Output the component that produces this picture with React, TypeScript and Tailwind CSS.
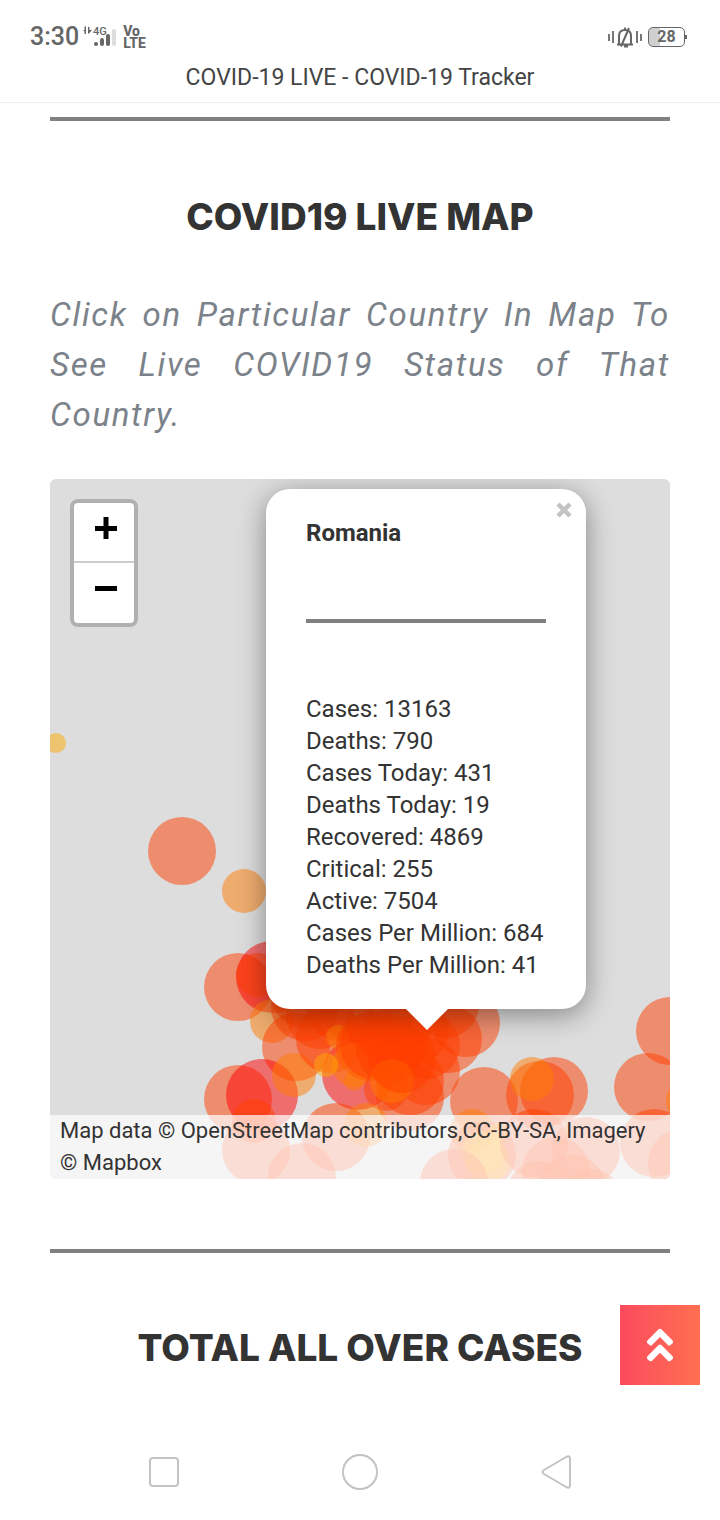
import { FaAngleDoubleUp } from "react-icons/fa";

type Kind = "high" | "severe" | "medium" | "low";
type Marker = [number, number, number, Kind];

const fills: Record<Kind, string> = {
  high: "#ff3d00",
  severe: "#ff0000",
  medium: "#ff7b00",
  low: "#ffaa00",
};

const markers: Marker[] = [
  [6, 264, 10, "low"],
  [132, 372, 34, "high"],
  [194, 412, 22, "medium"],
  [188, 508, 34, "high"],
  [222, 498, 36, "severe"],
  [208, 496, 22, "high"],
  [222, 542, 22, "medium"],
  [246, 568, 34, "high"],
  [188, 620, 34, "high"],
  [212, 616, 36, "severe"],
  [204, 642, 22, "high"],
  [244, 596, 22, "medium"],
  [308, 595, 36, "severe"],
  [304, 602, 10, "medium"],
  [255, 528, 34, "high"],
  [270, 536, 34, "high"],
  [280, 560, 34, "high"],
  [255, 515, 34, "high"],
  [290, 528, 34, "high"],
  [305, 530, 34, "high"],
  [288, 558, 12, "medium"],
  [320, 568, 34, "high"],
  [330, 545, 34, "high"],
  [304, 586, 22, "medium"],
  [324, 566, 34, "high"],
  [340, 570, 34, "high"],
  [345, 561, 34, "high"],
  [350, 541, 34, "high"],
  [365, 551, 34, "high"],
  [376, 566, 34, "high"],
  [376, 592, 34, "high"],
  [360, 602, 34, "high"],
  [360, 618, 34, "high"],
  [336, 610, 22, "high"],
  [342, 602, 22, "medium"],
  [352, 580, 34, "high"],
  [398, 560, 34, "high"],
  [416, 544, 34, "high"],
  [395, 525, 34, "high"],
  [276, 586, 12, "low"],
  [434, 622, 34, "high"],
  [490, 616, 34, "high"],
  [504, 612, 34, "high"],
  [482, 600, 22, "medium"],
  [620, 552, 34, "high"],
  [598, 608, 34, "high"],
  [638, 622, 22, "medium"],
  [604, 664, 34, "high"],
  [632, 684, 34, "high"],
  [206, 671, 34, "high"],
  [252, 698, 34, "high"],
  [286, 658, 34, "high"],
  [316, 646, 22, "medium"],
  [422, 652, 22, "medium"],
  [432, 676, 34, "high"],
  [434, 674, 22, "low"],
  [438, 682, 22, "low"],
  [448, 654, 10, "low"],
  [404, 704, 34, "high"],
  [484, 664, 34, "high"],
  [536, 672, 34, "high"],
  [506, 692, 34, "high"],
  [490, 716, 34, "high"],
  [522, 710, 34, "high"],
  [540, 724, 34, "high"],
];

const stats = [
  "Cases: 13163",
  "Deaths: 790",
  "Cases Today: 431",
  "Deaths Today: 19",
  "Recovered: 4869",
  "Critical: 255",
  "Active: 7504",
  "Cases Per Million: 684",
  "Deaths Per Million: 41",
];

function StatusBar() {
  return (
    <div className="flex h-[54px] items-center justify-between pt-5 pr-[33px] pl-[30px] text-[#666]">
      <div className="flex items-center">
        <span className="text-[25px] leading-8 font-medium">3:30</span>
        <svg className="ml-1" width="36" height="24" viewBox="0 0 36 24" fill="#666" role="img" aria-label="4G signal">
          <path d="M0 5h1.500v-3l1.500-1v8h-1.500v-2.500zM5 1.500l1.500 1v2.500h2.500l-2.500 3-1.500 1z" />
          <text x="10" y="10" fontSize="11" fontFamily="Roboto" fontWeight="500">4G</text>
          <rect x="11" y="17" width="4" height="4" rx="2" />
          <rect x="17" y="13" width="4" height="8" rx="2" />
          <rect x="23" y="9" width="4" height="12" rx="2" />
          <rect x="29" y="4" width="4" height="17" rx="2" fill="#ddd" />
        </svg>
        <span className="ml-1 flex flex-col text-sm leading-3 font-extrabold">
          <span>Vo</span>
          <span>LTE</span>
        </span>
      </div>
      <div className="flex items-center gap-1.5">
        <div className="flex items-center gap-0.5">
          <span className="h-[7px] w-0.5 bg-[#777]" />
          <span className="h-3 w-0.5 bg-[#777]" />
          <svg width="18" height="24" viewBox="0 0 18 24" fill="none" stroke="#666" strokeWidth="2" aria-label="Muted" role="img">
            <path d="M1 19.500h16M3 19v-8q0-6 6-6t6 6v8M9 5V2.500M13 3L5 21.500M8 21.500h4" />
          </svg>
          <span className="h-3 w-0.5 bg-[#777]" />
          <span className="h-[7px] w-0.5 bg-[#777]" />
        </div>
        <div className="flex items-center">
          <div className="flex h-5 w-[37px] items-center justify-center rounded-[5px] border border-[#666] bg-linear-to-r from-[#d0d0d0] from-30% to-white to-30% text-base leading-4 font-bold">
            28
          </div>
          <span className="h-1 w-0.5 bg-[#666]" />
        </div>
      </div>
    </div>
  );
}

function CasesMap() {
  return (
    <section aria-label="Live map" className="relative flex h-[700px] flex-col justify-between overflow-hidden rounded-md bg-[#ddd]">
      <svg className="absolute top-0 left-0" width="620" height="700" viewBox="0 0 620 700" aria-hidden="true">
        {markers.map(([x, y, r, kind], i) => (
          <circle key={i} cx={x} cy={y} r={r} fill={fills[kind]} fillOpacity="0.5" />
        ))}
      </svg>

      <div className="relative m-5 flex w-[68px] flex-col overflow-hidden rounded-lg border-4 border-[#b0b0b0] bg-white">
        <button type="button" aria-label="Zoom in" className="flex h-[60px] items-center justify-center border-b-2 border-[#ccc] pb-2 pl-1">
          <svg width="22" height="22" viewBox="0 0 22 22"><path d="M8.500 0h5v9H22v5h-8.500v8h-5v-8H0V9h8.500z" /></svg>
        </button>
        <button type="button" aria-label="Zoom out" className="flex h-[60px] items-center justify-center pb-2 pl-1">
          <svg width="22" height="22" viewBox="0 0 22 22"><path d="M0 8h22v5H0z" /></svg>
        </button>
      </div>

      <div className="absolute top-[10px] left-[216px] w-[320px]">
        <div className="relative rounded-[24px] bg-white px-10 py-7 text-2xl leading-8 text-[#333] shadow-[0_6px_28px_rgba(0,0,0,0.4)]">
          <button type="button" aria-label="Close" className="absolute top-[11px] right-3 flex size-5 items-center justify-center">
            <svg width="16" height="16" viewBox="0 0 16 16" stroke="#c3c3c3" strokeWidth="4.500"><path d="M2 2l12 12M14 2L2 14" /></svg>
          </button>
          <h2 className="font-bold">Romania</h2>
          <hr className="my-[70px] border-t-4 border-[#808080]" />
          {stats.map((s) => (
            <p key={s} className="whitespace-nowrap">{s}</p>
          ))}
        </div>
        <svg className="absolute top-full left-[140px]" width="42" height="21" viewBox="0 0 42 21" aria-hidden="true">
          <path d="M0 0h42L21 21z" fill="#fff" />
        </svg>
      </div>

      <p className="relative bg-white/70 px-[10px] text-[22px] leading-8 text-[#333]">
        Map data © <a href="#osm">OpenStreetMap</a> contributors,<a href="#license">CC-BY-SA</a>, Imagery{" "}
        <span className="inline-block whitespace-nowrap">© <a href="#mapbox">Mapbox</a></span>
      </p>
    </section>
  );
}

export default function App() {
  return (
    <div className="flex min-h-screen flex-col bg-white font-['Roboto',sans-serif] text-[#333]">
      <header className="border-b border-[#eee]">
        <StatusBar />
        <p className="pt-2 pb-2 text-center text-[23px] leading-8 text-[#444]">COVID-19 LIVE - COVID-19 Tracker</p>
      </header>

      <main className="px-[50px] pt-[14px]">
        <hr className="border-t-4 border-[#808080]" />
        <h1 className="mt-[71px] text-center font-['Inter',sans-serif] text-[37px] leading-[50px] font-extrabold">COVID19 LIVE MAP</h1>
        <p className="mt-12 mb-[39px] text-justify text-[33px] leading-[50px] tracking-wider text-[#7b828a] italic">
          Click on Particular Country In Map To See Live COVID19 Status of That Country.
        </p>
        <CasesMap />
        <hr className="mt-[70px] border-t-4 border-[#808080]" />
      </main>

      <div className="mt-[52px] flex items-center justify-end pr-5">
        <h2 className="flex-1 pt-1.5 pl-[100px] text-center font-['Inter',sans-serif] text-[37px] leading-[50px] font-extrabold whitespace-nowrap">TOTAL ALL OVER CASES</h2>
        <a href="#top" aria-label="Back to top" className="flex size-20 items-center justify-center bg-linear-to-r from-[#fb4a5e] to-[#ff6f50] text-white">
          <FaAngleDoubleUp size={42} />
        </a>
      </div>

      <nav aria-label="System" className="mt-auto flex h-24 items-center justify-between px-[145px]">
        <button type="button" aria-label="Recent apps">
          <svg width="38" height="38" viewBox="0 0 38 38" fill="none" stroke="#c3c3c3" strokeWidth="2"><rect x="5" y="5" width="28" height="28" rx="3" /></svg>
        </button>
        <button type="button" aria-label="Home">
          <svg width="38" height="38" viewBox="0 0 38 38" fill="none" stroke="#c3c3c3" strokeWidth="2"><circle cx="19" cy="19" r="17" /></svg>
        </button>
        <button type="button" aria-label="Back">
          <svg width="38" height="38" viewBox="0 0 38 38" fill="none" stroke="#c3c3c3" strokeWidth="2" strokeLinejoin="round"><path d="M7 17Q4 19 7 21L29 34Q33 36 33 32V6Q33 2 29 4Z" /></svg>
        </button>
      </nav>
    </div>
  );
}
